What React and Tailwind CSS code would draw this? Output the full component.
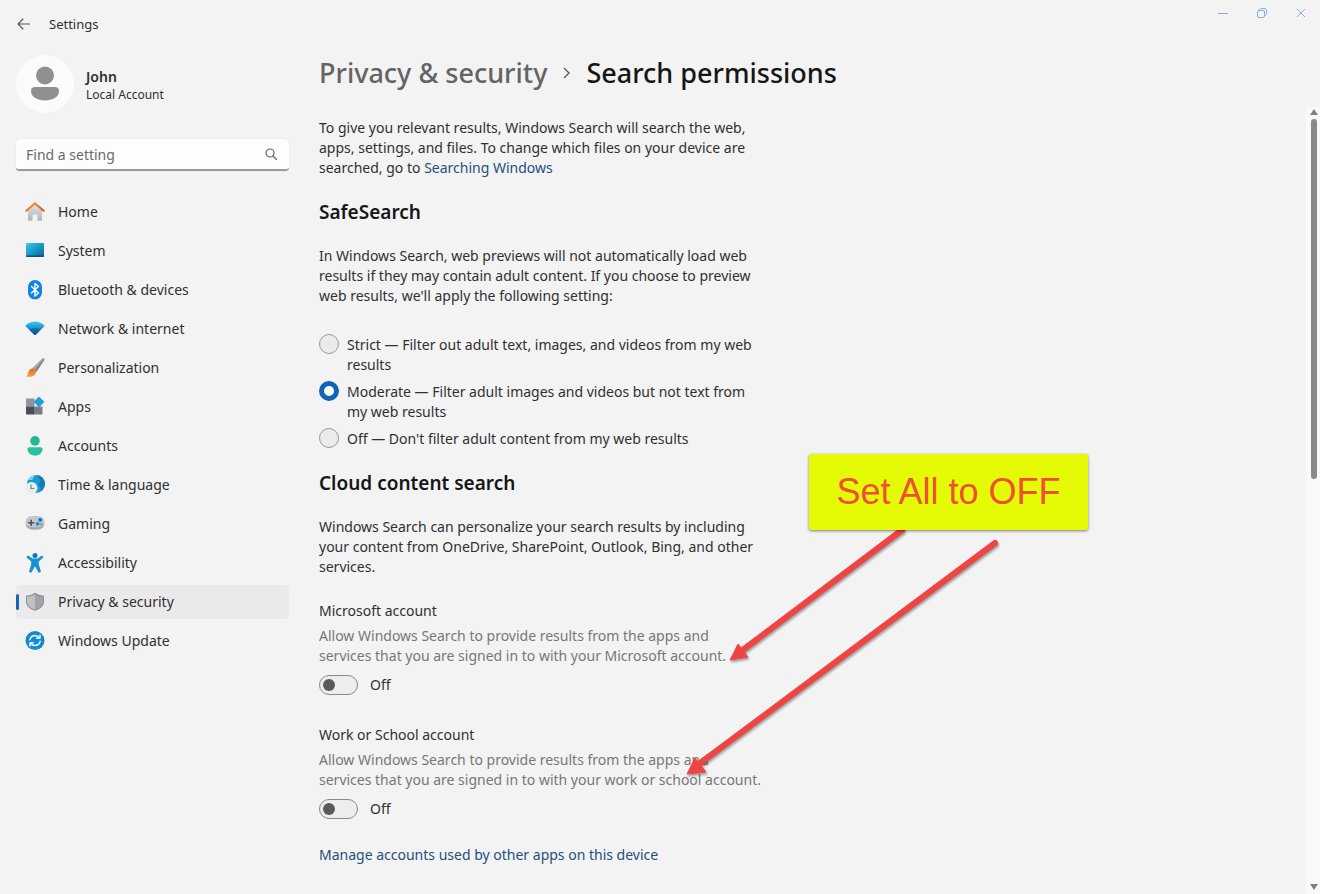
import { useState } from "react";

const HomeIcon = () => (
  <svg viewBox="0 0 20 20" className="size-5 shrink-0" aria-hidden="true">
    <defs>
      <linearGradient id="roof" x1="0" y1="0" x2="1" y2="1">
        <stop offset="0" stopColor="#f0a04a" />
        <stop offset="1" stopColor="#d4581c" />
      </linearGradient>
      <linearGradient id="wall" x1="0" y1="0" x2="0" y2="1">
        <stop offset="0" stopColor="#e2e1e4" />
        <stop offset="1" stopColor="#b4b4ba" />
      </linearGradient>
    </defs>
    <path d="M3 8.500 10 2.200l7 6.300v9.200a1 1 0 0 1-1 1h-3.600v-5.400a.8.8 0 0 0-.8-.8H8.400a.8.8 0 0 0-.8.8v5.400H4a1 1 0 0 1-1-1Z" fill="url(#wall)" />
    <path d="M1.400 8.800 10 1.200l8.600 7.600" fill="none" stroke="url(#roof)" strokeWidth="2.200" strokeLinecap="round" strokeLinejoin="round" />
  </svg>
);

const SystemIcon = () => (
  <svg viewBox="0 0 20 20" className="size-5 shrink-0" aria-hidden="true">
    <defs>
      <linearGradient id="screen" x1="0" y1="0" x2="1" y2="1">
        <stop offset="0" stopColor="#3cc8e8" />
        <stop offset="0.5" stopColor="#1899c4" />
        <stop offset="1" stopColor="#0b5f94" />
      </linearGradient>
    </defs>
    <rect x="1" y="2" width="18" height="14" rx="1.200" fill="url(#screen)" />
    <rect x="1" y="14.500" width="18" height="1.500" rx="0.700" fill="#0d5379" />
  </svg>
);

const BluetoothIcon = () => (
  <svg viewBox="0 0 20 20" className="size-5 shrink-0" aria-hidden="true">
    <rect x="3" y="0" width="14" height="19.500" rx="7" fill="#0f83e6" />
    <path d="m6.500 6.500 7 6.500L10 16V3.500l3.500 3-7 6.500" fill="none" stroke="#fff" strokeWidth="1.400" strokeLinejoin="round" strokeLinecap="round" />
  </svg>
);

const NetworkIcon = () => (
  <svg viewBox="0 0 20 20" className="size-5 shrink-0" aria-hidden="true">
    <defs>
      <linearGradient id="wifi" x1="0" y1="0" x2="0" y2="1">
        <stop offset="0" stopColor="#46c9ee" />
        <stop offset="0.45" stopColor="#1e96d0" />
        <stop offset="1" stopColor="#0c5493" />
      </linearGradient>
    </defs>
    <path d="M.8 6.200c5-5 13.400-5 18.400 0 .4.400.4.900 0 1.300l-8.400 8.200c-.5.500-1.100.5-1.600 0L.8 7.500c-.4-.4-.4-.9 0-1.300Z" fill="url(#wifi)" />
    <path d="M4.400 10.900c3.200-2.500 8-2.500 11.200 0l-4.800 4.800c-.5.500-1.100.5-1.600 0Z" fill="#0b4d87" opacity=".45" />
  </svg>
);

const BrushIcon = () => (
  <svg viewBox="0 0 20 20" className="size-5 shrink-0" aria-hidden="true">
    <defs>
      <linearGradient id="bristle" x1="0" y1="0" x2="0" y2="1">
        <stop offset="0" stopColor="#e2691a" />
        <stop offset="1" stopColor="#fba43a" />
      </linearGradient>
    </defs>
    <path d="M19 .6c.6.600.5 1.300.1 2L11.500 14 7.400 10.300 17 .8c.6-.5 1.400-.7 2-.2Z" fill="#85868c" />
    <path d="M17 .8c.6-.5 1.400-.7 2-.2L9 11.800l-1.600-1.500Z" fill="#b2b2b8" />
    <path d="M6.800 10.600c1.800-.4 4.300 1.400 4.100 3.800-.2 3.200-4.700 5-9.900 4.300 2-1.100 1.700-2.700 2.400-4.700.6-1.800 1.800-3.100 3.400-3.400Z" fill="url(#bristle)" />
  </svg>
);

const AppsIcon = () => (
  <svg viewBox="0 0 20 20" className="size-5 shrink-0" aria-hidden="true">
    <path d="M1 2.600c0-.6.400-1 1-1h7.500v8H1Z" fill="#8d949c" />
    <path d="M1 9.600h8V17.500H2c-.6 0-1-.4-1-1Z" fill="#474e56" />
    <path d="M9 9.600h8.500v6.900c0 .6-.4 1-1 1H9Z" fill="#747c86" />
    <path d="M13.200.3a1 1 0 0 1 1.600 0l4 3.900a1 1 0 0 1 0 1.400l-4 4a1 1 0 0 1-1.600 0l-4-4a1 1 0 0 1 0-1.400Z" fill="#249ce0" />
  </svg>
);

const AccountsIcon = () => (
  <svg viewBox="0 0 20 20" className="size-5 shrink-0" aria-hidden="true">
    <circle cx="10" cy="4.800" r="4.800" fill="#20b994" />
    <path d="M4.200 11.200h11.600c1 0 1.800.8 1.800 1.800 0 3.800-3.400 6.500-7.600 6.500S2.400 16.800 2.400 13c0-1 .8-1.800 1.800-1.800Z" fill="#2bc29e" />
  </svg>
);

const TimeIcon = () => (
  <svg viewBox="0 0 20 20" className="size-5 shrink-0" aria-hidden="true">
    <circle cx="11" cy="9" r="9" fill="#1c9bd2" />
    <path d="M12 .1c4.500.4 8 4 8 8.500 0 3.400-1.700 6.200-4.500 8 1-3.500.2-4.800-1.500-5.800-1.500-1-.5-2.500 1-3.500C17 5.500 13 3.500 12 .1Z" fill="#116da9" opacity=".7" />
    <path d="M3.500 5c1.500-3 4-4.600 6.500-5-.5 2-2 3-3 5Z" fill="#6fd4ee" />
    <circle cx="6.500" cy="13" r="6" fill="#e9edf0" />
    <path d="M6 9.800v3.700h3" fill="none" stroke="#77838c" strokeWidth="1.200" strokeLinecap="round" strokeLinejoin="round" />
  </svg>
);

const GamingIcon = () => (
  <svg viewBox="0 0 20 20" className="size-5 shrink-0" aria-hidden="true">
    <rect x="0.500" y="2" width="19" height="13.500" rx="6" fill="#c3c7cb" />
    <path d="M.6 9.500A6.700 6.700 0 0 0 7.200 15.500h5.600a6.700 6.700 0 0 0 6.600-6c-1 2.500-3.500 3.700-6.600 3.700H7.200c-3.100 0-5.600-1.200-6.600-3.700Z" fill="#a3a8ae" />
    <path d="M6.200 6.200v5M3.700 8.700h5" stroke="#4b5157" strokeWidth="1.600" strokeLinecap="round" />
    <circle cx="15.200" cy="5.800" r="1.900" fill="#1a6fb4" />
    <circle cx="12.600" cy="9.800" r="1.900" fill="#2686c9" />
    <circle cx="16.400" cy="10.300" r="1.200" fill="#5aa5d5" />
  </svg>
);

const AccessibilityIcon = () => (
  <svg viewBox="0 0 20 20" className="size-5 shrink-0" aria-hidden="true">
    <circle cx="10" cy="2.600" r="2.500" fill="#1276b8" />
    <path d="M3.500 2.800 7.300 5.600h5.400l3.800-2.800c1.200-.7 2.500 1.200 1.300 2.200l-4 3.400v3.200l2 6.300c.5 1.800-2 2.600-2.700.9L10 13.200l-3.100 5.600c-.7 1.700-3.200.9-2.700-.9l2-6.300V8.400L2.200 5c-1.200-1 .1-2.900 1.300-2.200Z" fill="#1a8fd6" />
  </svg>
);

const ShieldIcon = () => (
  <svg viewBox="0 0 20 20" className="size-5 shrink-0" aria-hidden="true">
    <path d="M10 .8c2.500 1.700 5 2.500 8.200 2.700.5 0 .8.300.8.800v5c0 4.700-3.500 7.800-9 9.500-5.500-1.700-9-4.800-9-9.500v-5c0-.5.300-.8.800-.8C5 3.300 7.500 2.500 10 .8Z" fill="#8d8f94" />
    <path d="M10 2.200c2.300 1.400 4.900 2.200 8 2.400v4.800c0 4-3.100 6.700-8 8.200Z" fill="#a1a3a8" />
    <path d="M10 2.200C7.700 3.600 5.100 4.400 2 4.600v4.800c0 4 3.100 6.700 8 8.200Z" fill="#c0c1c5" />
  </svg>
);

const UpdateIcon = () => (
  <svg viewBox="0 0 20 20" className="size-5 shrink-0" aria-hidden="true">
    <circle cx="10" cy="9.500" r="9.500" fill="#1389cf" />
    <path d="M4.800 8.800C5.500 6 7.700 4.600 10 4.600c2 0 3.600.8 4.800 2.400M15 4v3.300h-3.400M15.200 10.300c-.7 2.800-2.900 4.200-5.200 4.200-2 0-3.600-.8-4.800-2.400M5 15v-3.300h3.400" fill="none" stroke="#d8f1ff" strokeWidth="1.600" strokeLinecap="round" strokeLinejoin="round" />
  </svg>
);

const NAV = [
  ["Home", HomeIcon],
  ["System", SystemIcon],
  ["Bluetooth & devices", BluetoothIcon],
  ["Network & internet", NetworkIcon],
  ["Personalization", BrushIcon],
  ["Apps", AppsIcon],
  ["Accounts", AccountsIcon],
  ["Time & language", TimeIcon],
  ["Gaming", GamingIcon],
  ["Accessibility", AccessibilityIcon],
  ["Privacy & security", ShieldIcon],
  ["Windows Update", UpdateIcon],
];

const FILTERS = [
  ["strict", "Strict — Filter out adult text, images, and videos from my web results"],
  ["moderate", "Moderate — Filter adult images and videos but not text from my web results"],
  ["off", "Off — Don't filter adult content from my web results"],
];

function TitleBar() {
  return (
    <header className="flex h-12 items-start justify-between">
      <div className="flex h-12 items-center gap-[18px] pl-[17px]">
        <button type="button" aria-label="Back" className="text-[#555]">
          <svg viewBox="0 0 14 12" className="h-3 w-3.5" fill="none" stroke="currentColor" strokeWidth="1.100" strokeLinecap="round" strokeLinejoin="round">
            <path d="M12.500 6H1.200M6 1 1 6l5 5" />
          </svg>
        </button>
        <span className="text-[13px] leading-5">Settings</span>
      </div>
      <div className="flex h-[26px] items-center text-[#85b2ce]">
        <button type="button" aria-label="Minimize" className="flex h-6 w-[39px] items-center justify-center">
          <svg viewBox="0 0 10 10" className="size-2.5" stroke="currentColor" fill="none"><path d="M0 5.500h10" /></svg>
        </button>
        <button type="button" aria-label="Restore" className="flex h-6 w-[39px] items-center justify-center">
          <svg viewBox="0 0 10 10" className="size-2.5" stroke="currentColor" fill="none">
            <rect x="0.500" y="2.500" width="7" height="7" rx="1.500" />
            <path d="M2.500 2.500C2.500 1 3 .5 4.500.5H7C8.700.5 9.500 1.300 9.500 3v2.500c0 1.500-.5 2-2 2" />
          </svg>
        </button>
        <button type="button" aria-label="Close" className="flex h-6 w-[39px] items-center justify-center">
          <svg viewBox="0 0 10 10" className="size-2.5" stroke="currentColor" fill="none"><path d="m1 1 8 8M9 1 1 9" /></svg>
        </button>
      </div>
    </header>
  );
}

function Sidebar() {
  return (
    <aside className="flex w-[273px] shrink-0 flex-col">
      <div className="flex items-center gap-3 pt-[7px]">
        <span className="flex size-[58px] items-center justify-center rounded-full bg-[#fbfbfb]">
          <svg viewBox="0 0 28 36" className="h-9 w-7" fill="#909090" aria-hidden="true">
            <circle cx="14" cy="9.500" r="9" />
            <path d="M4 21h20a4 4 0 0 1 4 4c0 6-6.500 9.500-14 9.500S0 31 0 25a4 4 0 0 1 4-4Z" />
          </svg>
        </span>
        <div className="pt-1">
          <p className="text-sm leading-[18px] font-semibold">John</p>
          <p className="text-xs leading-[18px]">Local Account</p>
        </div>
      </div>
      <div className="mt-[26px] flex h-8 items-center rounded-[4px] border-b-2 border-[#9a9a9a] bg-[#fdfdfd] pr-3 pl-2.5 shadow-[0_0_1px_#00000033]">
        <input type="text" aria-label="Find a setting" placeholder="Find a setting" className="min-w-0 flex-1 bg-transparent pt-0.5 text-sm outline-none placeholder:text-[#6a6a6a]" />
        <svg viewBox="0 0 12 12" className="size-3" fill="none" stroke="#666" strokeWidth="1.200" strokeLinecap="round" aria-hidden="true">
          <circle cx="5" cy="5" r="4" />
          <path d="m8 8 3.500 3.500" />
        </svg>
      </div>
      <nav className="mt-6 flex flex-col gap-[5px]">
        {NAV.map(([label, Icon]) => {
          const active = label === "Privacy & security";
          return (
            <a
              key={label}
              href="#"
              aria-current={active ? "page" : undefined}
              className={active ? "flex h-[34px] items-center rounded-[4px] bg-[#eaeaea]" : "flex h-[34px] items-center rounded-[4px]"}
            >
              <span className={active ? "mr-1.5 h-4 w-[3px] rounded-full bg-[#1866b0]" : "mr-1.5 h-4 w-[3px]"} />
              <Icon />
              <span className="ml-[13px] text-sm">{label}</span>
            </a>
          );
        })}
      </nav>
    </aside>
  );
}

function AccountToggle({ id, title, children }) {
  const [on, setOn] = useState(false);
  return (
    <section className="text-sm leading-5">
      <h3>{title}</h3>
      <p className="mt-[5px] text-[#777]">{children}</p>
      <div className="mt-[9px] flex h-5 items-center gap-3">
        <input
          id={id}
          type="checkbox"
          role="switch"
          aria-label={title}
          checked={on}
          onChange={() => setOn(!on)}
          className="flex h-5 w-[39px] shrink-0 appearance-none items-center rounded-full border border-[#8a8a8a] bg-[#ededed] px-[3px] before:size-3 before:rounded-full before:bg-[#5a5a5a] checked:justify-end checked:bg-[#0f64b4] checked:before:bg-white"
        />
        <label htmlFor={id}>{on ? "On" : "Off"}</label>
      </div>
    </section>
  );
}

function Annotation() {
  return (
    <>
      <svg viewBox="0 0 340 260" className="pointer-events-none absolute top-[525px] left-[680px] h-[260px] w-[340px] drop-shadow-[1px_2px_1px_#00000059]" aria-hidden="true">
        <g stroke="#ef4444" strokeWidth="6" strokeLinecap="round">
          <path d="M222 5 60 127" />
          <path d="M315 18 19 239" />
        </g>
        <g fill="#ef4444">
          <path d="M50 135 58 119 68 132Z" stroke="#ef4444" strokeLinejoin="round" />
          <path d="M7 249 15 233 26 247Z" stroke="#ef4444" strokeLinejoin="round" />
        </g>
      </svg>
      <div className="absolute top-[454px] left-[809px] flex h-[76px] w-[279px] items-center justify-center rounded-[3px] bg-[#e4fb05] font-['Liberation_Sans',Arial,sans-serif] text-4xl text-[#f04e37] shadow-[0_1px_3px_#00000080]">
        Set All to OFF
      </div>
    </>
  );
}

function ScrollBar() {
  return (
    <div className="flex w-3.5 shrink-0 flex-col pt-[59px]" aria-hidden="true">
      <div className="flex flex-1 flex-col items-center bg-[#f9f9f9] pt-0.5 pb-1 pl-0.5">
        <svg viewBox="0 0 8 6" className="h-1.5 w-2" fill="#7f7f7f"><path d="M4 0 8 6H0Z" /></svg>
        <div className="mt-1 flex w-full flex-1 flex-col items-center">
          <div className="h-[47%] w-1.5 rounded-full bg-[#8a8a8a]" />
        </div>
        <svg viewBox="0 0 8 6" className="h-1.5 w-2" fill="#7f7f7f"><path d="M0 0h8L4 6Z" /></svg>
      </div>
    </div>
  );
}

export default function App() {
  const [filter, setFilter] = useState("moderate");
  return (
    <div className="relative flex min-h-screen flex-col bg-[#f3f3f3] font-['Noto_Sans','Open_Sans',sans-serif] text-[#303030]">
      <TitleBar />
      <div className="flex flex-1 pl-4">
        <Sidebar />
        <main className="min-w-0 flex-1 pl-[30px] text-sm leading-5">
          <h1 className="flex h-[50px] items-center gap-4 text-[27px] font-medium">
            <a href="#" className="text-[#646464]">Privacy &amp; security</a>
            <svg viewBox="0 0 7 12" className="h-3 w-[7px]" fill="none" stroke="#555" strokeWidth="1.300" aria-hidden="true"><path d="m1 1 5 5-5 5" /></svg>
            <span className="text-[#161616]">Search permissions</span>
          </h1>
          <p className="mt-5">
            To give you relevant results, Windows Search will search the web,<br />
            apps, settings, and files. To change which files on your device are<br />
            searched, go to <a href="#" className="text-[#254f80]">Searching Windows</a>
          </p>
          <h2 className="mt-5 text-[19px] leading-7 font-semibold text-[#161616]">SafeSearch</h2>
          <p className="mt-5">
            In Windows Search, web previews will not automatically load web<br />
            results if they may contain adult content. If you choose to preview<br />
            web results, we'll apply the following setting:
          </p>
          <fieldset aria-label="SafeSearch filter" className="mt-7 flex max-w-[440px] flex-col gap-1.5">
            {FILTERS.map(([id, text]) => (
              <label key={id} className="flex items-start gap-2">
                <input
                  type="radio"
                  name="filter"
                  checked={filter === id}
                  onChange={() => setFilter(id)}
                  className="size-5 shrink-0 appearance-none rounded-full border border-[#9a9a9a] bg-[#ebebeb] checked:border-[5px] checked:border-[#0f64b4] checked:bg-white"
                />
                <span className="pt-px">{text}</span>
              </label>
            ))}
          </fieldset>
          <h2 className="mt-5 text-[19px] leading-7 font-semibold text-[#161616]">Cloud content search</h2>
          <p className="mt-5">
            Windows Search can personalize your search results by including<br />
            your content from OneDrive, SharePoint, Outlook, Bing, and other<br />
            services.
          </p>
          <div className="mt-6 flex flex-col gap-[30px]">
            <AccountToggle id="ms" title="Microsoft account">
              Allow Windows Search to provide results from the apps and<br />
              services that you are signed in to with your Microsoft account.
            </AccountToggle>
            <AccountToggle id="work" title="Work or School account">
              Allow Windows Search to provide results from the apps and<br />
              services that you are signed in to with your work or school account.
            </AccountToggle>
          </div>
          <a href="#" className="mt-[26px] inline-block text-[#254f80]">Manage accounts used by other apps on this device</a>
        </main>
        <ScrollBar />
      </div>
      <Annotation />
    </div>
  );
}
